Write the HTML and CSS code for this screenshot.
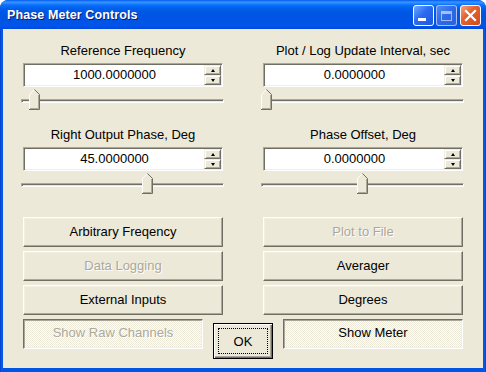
FILE: index.html
```html
<!DOCTYPE html>
<html>
<head>
<meta charset="utf-8">
<link rel="stylesheet" href="styles.css">
</head>
<body>
<div class="window">
  <div class="titlebar">
    <span class="title">Phase Meter Controls</span>
    <div class="caption-btns">
      <div class="cbtn cbtn-min"><span class="min-bar"></span></div>
      <div class="cbtn cbtn-max"><span class="max-box"></span></div>
      <div class="cbtn cbtn-close">
        <svg width="13" height="13" viewBox="0 0 13 13"><path d="M2 2 L11 11 M11 2 L2 11" stroke="#fff" stroke-width="2.2" stroke-linecap="square"/></svg>
      </div>
    </div>
  </div>
  <div class="client">
    <div class="fields">
      <div class="field">
        <div class="label">Reference Frequency</div>
        <div class="edit"><span class="value">1000.0000000</span><div class="spin"><div class="spin-btn"><span class="arr-up"></span></div><div class="spin-btn"><span class="arr-down"></span></div></div></div>
        <div class="slider"><div class="track"></div><svg class="thumb" style="left:8px" width="11" height="21" viewBox="0 0 11 21"><path d="M0.5 20.5 V5.5 L5.5 0.5 L10.5 5.5 V20.5 Z" fill="#ECE9D8"/><path d="M0.5 20 V5.5 L5 1" fill="none" stroke="#fff"/><path d="M5.5 0.5 L10.5 5.5 V20.5 H0" fill="none" stroke="#716F64"/><path d="M9.5 6 V19.5 H1" fill="none" stroke="#ACA899"/></svg></div>
      </div>
      <div class="field">
        <div class="label">Plot / Log Update Interval, sec</div>
        <div class="edit"><span class="value">0.0000000</span><div class="spin"><div class="spin-btn"><span class="arr-up"></span></div><div class="spin-btn"><span class="arr-down"></span></div></div></div>
        <div class="slider"><div class="track"></div><svg class="thumb" style="left:0px" width="11" height="21" viewBox="0 0 11 21"><path d="M0.5 20.5 V5.5 L5.5 0.5 L10.5 5.5 V20.5 Z" fill="#ECE9D8"/><path d="M0.5 20 V5.5 L5 1" fill="none" stroke="#fff"/><path d="M5.5 0.5 L10.5 5.5 V20.5 H0" fill="none" stroke="#716F64"/><path d="M9.5 6 V19.5 H1" fill="none" stroke="#ACA899"/></svg></div>
      </div>
      <div class="field">
        <div class="label">Right Output Phase, Deg</div>
        <div class="edit"><span class="value">45.0000000</span><div class="spin"><div class="spin-btn"><span class="arr-up"></span></div><div class="spin-btn"><span class="arr-down"></span></div></div></div>
        <div class="slider"><div class="track"></div><svg class="thumb" style="left:121px" width="11" height="21" viewBox="0 0 11 21"><path d="M0.5 20.5 V5.5 L5.5 0.5 L10.5 5.5 V20.5 Z" fill="#ECE9D8"/><path d="M0.5 20 V5.5 L5 1" fill="none" stroke="#fff"/><path d="M5.5 0.5 L10.5 5.5 V20.5 H0" fill="none" stroke="#716F64"/><path d="M9.5 6 V19.5 H1" fill="none" stroke="#ACA899"/></svg></div>
      </div>
      <div class="field">
        <div class="label">Phase Offset, Deg</div>
        <div class="edit"><span class="value">0.0000000</span><div class="spin"><div class="spin-btn"><span class="arr-up"></span></div><div class="spin-btn"><span class="arr-down"></span></div></div></div>
        <div class="slider"><div class="track"></div><svg class="thumb" style="left:96px" width="11" height="21" viewBox="0 0 11 21"><path d="M0.5 20.5 V5.5 L5.5 0.5 L10.5 5.5 V20.5 Z" fill="#ECE9D8"/><path d="M0.5 20 V5.5 L5 1" fill="none" stroke="#fff"/><path d="M5.5 0.5 L10.5 5.5 V20.5 H0" fill="none" stroke="#716F64"/><path d="M9.5 6 V19.5 H1" fill="none" stroke="#ACA899"/></svg></div>
      </div>
    </div>
    <div class="buttons">
      <div class="btn">Arbitrary Freqency</div>
      <div class="btn disabled">Plot to File</div>
      <div class="btn disabled">Data Logging</div>
      <div class="btn">Averager</div>
      <div class="btn">External Inputs</div>
      <div class="btn">Degrees</div>
    </div>
    <div class="bottom-row">
      <div class="toggle disabled">Show Raw Channels</div>
      <div class="btn ok"><span class="focus">OK</span></div>
      <div class="toggle">Show Meter</div>
    </div>
  </div>
</div>
</body>
</html>
```
FILE: styles.css
```css
* { box-sizing: border-box; }
html, body { margin: 0; padding: 0; background: #fff; }
body { font-family: "Liberation Sans", Arial, sans-serif; font-size: 13px; color: #000; }

.window {
  width: 486px;
  height: 372px;
  background: linear-gradient(to right, #0030B8 0, #0A5AE8 1px, #0055E5 3px, #0055E5 483px, #0A5AE8 485px, #0030B8 486px);
  border-radius: 8px 8px 0 0;
  display: flex;
  flex-direction: column;
  overflow: hidden;
}

.titlebar {
  height: 29px;
  flex: none;
  display: flex;
  align-items: center;
  justify-content: space-between;
  padding: 0 5px 0 7px;
  background: linear-gradient(to bottom, #0058EE 0px, #3A93FF 2px, #288EFF 3px, #0A70FC 5px, #0062EE 8px, #0057E5 12px, #0054E3 20px, #0055EB 26px, #0049D8 29px);
  border-radius: 8px 8px 0 0;
}
.title {
  color: #fff;
  font-weight: bold;
  font-size: 12.5px;
  text-shadow: 1px 1px 0 #0A1E6E;
  letter-spacing: 0.1px;
  margin-top: 1px;
}
.caption-btns { display: flex; gap: 2px; margin-top: 2px; }
.cbtn {
  width: 21px;
  height: 21px;
  border: 1px solid #fff;
  border-radius: 3px;
  display: flex;
  align-items: center;
  justify-content: center;
  position: relative;
}
.cbtn-min { background: linear-gradient(135deg, #6FA8FF 0%, #2B6BF0 45%, #1D57DC 100%); }
.cbtn-max { background: linear-gradient(135deg, #4F8CF4 0%, #2E69E6 50%, #2A62DE 100%); border-color: rgba(255,255,255,0.55); }
.cbtn-close { background: linear-gradient(135deg, #F4A487 0%, #E3622F 40%, #D14C22 100%); margin-left: 1px; }
.min-bar { position: absolute; left: 4px; bottom: 4px; width: 8px; height: 3px; background: #fff; }
.max-box { width: 11px; height: 10px; border: 1px solid rgba(255,255,255,0.55); border-top-width: 3px; }

.client {
  flex: 1;
  margin: 0 3px 4px 3px;
  background: #ECE9D8;
  padding: 14px 20px 0 20px;
}

.fields {
  display: grid;
  grid-template-columns: 200px 200px;
  column-gap: 40px;
}
.field { height: 84px; }
.label {
  height: 16px;
  line-height: 16px;
  text-align: center;
  white-space: nowrap;
}
.edit {
  margin-top: 4px;
  height: 24px;
  background: #fff;
  border: 1px solid;
  border-color: #ACA899 #fff #fff #ACA899;
  box-shadow: inset 1px 1px 0 #716F64, inset -1px -1px 0 #F1EFE2;
  display: flex;
  align-items: center;
  padding: 2px 1px 2px 1px;
}
.value { flex: 1; text-align: center; line-height: 18px; }
.spin {
  width: 17px;
  height: 20px;
  display: flex;
  flex-direction: column;
}
.spin-btn {
  flex: 1;
  background: #ECE9D8;
  border: 1px solid;
  border-color: #F1EFE2 #716F64 #716F64 #F1EFE2;
  box-shadow: inset 1px 1px 0 #fff, inset -1px -1px 0 #ACA899;
  display: flex;
  align-items: center;
  justify-content: center;
}
.arr-up { width: 0; height: 0; border-left: 2.5px solid transparent; border-right: 2.5px solid transparent; border-bottom: 3px solid #000; }
.arr-down { width: 0; height: 0; border-left: 2.5px solid transparent; border-right: 2.5px solid transparent; border-top: 3px solid #000; }

.slider {
  position: relative;
  height: 40px;
  margin: 0 -1px 0 -2px;
}
.track {
  position: absolute;
  left: 0;
  right: 0;
  top: 12px;
  height: 4px;
  border: 1px solid;
  border-color: #ACA899 #fff #fff #ACA899;
  box-shadow: inset 1px 1px 0 #716F64;
  background: #ECE9D8;
}
.thumb { position: absolute; top: 2px; }

.buttons {
  margin-top: 6px;
  display: grid;
  grid-template-columns: 200px 200px;
  column-gap: 40px;
  row-gap: 4px;
}
.btn {
  height: 30px;
  background: #ECE9D8;
  border: 1px solid;
  border-color: #fff #716F64 #716F64 #fff;
  box-shadow: inset -1px -1px 0 #ACA899, inset 1px 1px 0 #F1EFE2;
  display: flex;
  align-items: center;
  justify-content: center;
  white-space: nowrap;
  padding-bottom: 1px;
}
.disabled { color: #ACA899; text-shadow: 1px 1px 0 #fff; }

.bottom-row {
  margin-top: 4px;
  display: flex;
  align-items: flex-start;
  gap: 10px;
}
.toggle {
  width: 180px;
  height: 30px;
  border: 1px solid;
  border-color: #716F64 #fff #fff #716F64;
  box-shadow: inset 1px 1px 0 #ACA899, inset -1px -1px 0 #F1EFE2;
  background-color: #F5F4EC;
  background-image: repeating-conic-gradient(#fff 0 25%, #ECE9D8 0 50%);
  background-size: 2px 2px;
  display: flex;
  align-items: center;
  justify-content: center;
  padding-bottom: 3px;
}
.btn.ok {
  width: 60px;
  height: 36px;
  margin-top: 4px;
  border: 1px solid #000;
  box-shadow: inset 1px 1px 0 #fff, inset -1px -1px 0 #716F64, inset -2px -2px 0 #ACA899;
  padding: 4px;
}
.focus {
  flex: 1;
  align-self: stretch;
  border: 1px dotted #000;
  display: flex;
  align-items: center;
  justify-content: center;
}
```
